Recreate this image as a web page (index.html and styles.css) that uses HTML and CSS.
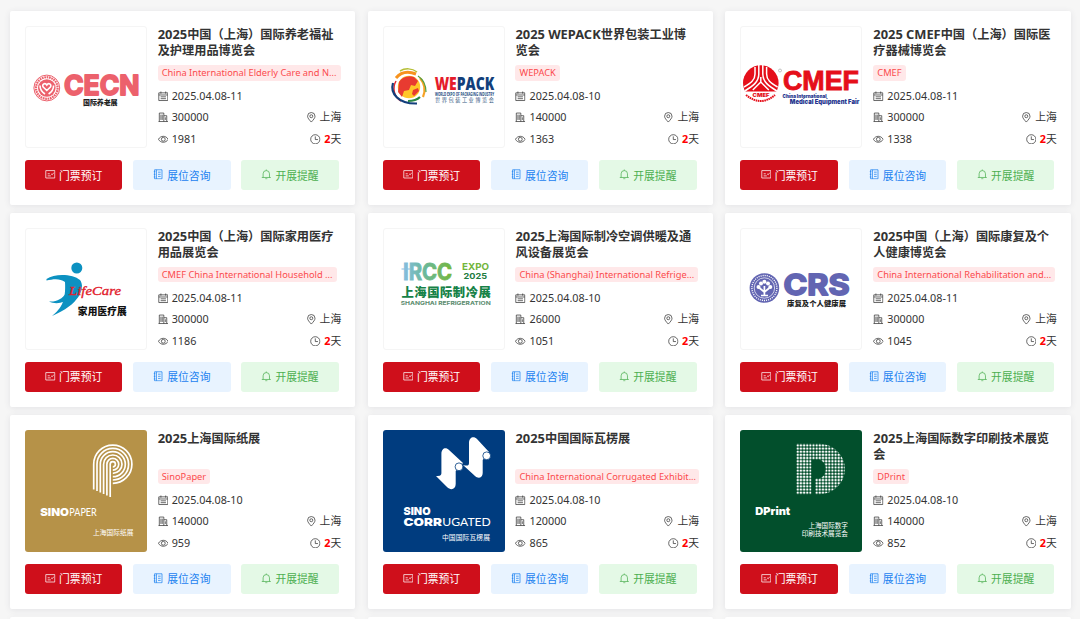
FILE: index.html
```html
<!DOCTYPE html>
<html lang="zh-CN">
<head>
    <meta charset="UTF-8">
    <meta name="viewport" content="width=device-width, initial-scale=1.0">
    <title>展会列表</title>
    <link rel="stylesheet" href="styles.css">
</head>
<body>
    <!-- 图标 -->
    <svg class="sprite" width="0" height="0">
        <symbol id="i-date" viewBox="0 0 20 20"><path d="M1.500 3.500h17v14.500h-17zM1.500 7.500h17M5.500 1v4M14.500 1v4M5 11h10M5 14.500h10"/></symbol>
        <symbol id="i-area" viewBox="0 0 20 20"><path d="M2.500 18V2h8.500v16M11 7h5.500v11M1 18h18M5.500 5v10M8 5v10M13.800 10v5"/></symbol>
        <symbol id="i-eye" viewBox="0 0 20 20"><path d="M.8 10C5 2.500 15 2.500 19.200 10C15 17.500 5 17.500 .8 10z"/><circle cx="10" cy="10" r="3.600"/></symbol>
        <symbol id="i-pin" viewBox="0 0 20 20"><path d="M10 19C6 14.500 3 11.500 3 8a7 7 0 0 1 14 0c0 3.500-3 6.500-7 11z"/><circle cx="10" cy="8" r="2.800"/></symbol>
        <symbol id="i-clock" viewBox="0 0 20 20"><circle cx="10" cy="10" r="8.700"/><path d="M10 4.500V10.500h5"/></symbol>
        <symbol id="i-ticket" viewBox="0 0 20 20"><path d="M1.500 3h17v14h-17zM5 9h4M5 13h6M11.500 9l2 2 3-4"/></symbol>
        <symbol id="i-note" viewBox="0 0 20 20"><path d="M3 1.500h14v17H3zM6.500 1.500v17M9.500 6h5M9.500 10h5M9.500 14h5M1.500 5h3M1.500 10h3M1.500 15h3"/></symbol>
        <symbol id="i-bell" viewBox="0 0 20 20"><path d="M1.500 16h17M4 16V9a6 6 0 0 1 12 0v7M10 3V1M8 18.500h4"/></symbol>
    </svg>

    <!-- 展会 logo -->
    <template id="cecn">
        <svg viewBox="0 0 122 122">
            <g fill="none" stroke="#ec616c">
                <circle cx="21.800" cy="62" r="12.900" stroke-width="1"/>
                <circle cx="21.800" cy="62" r="10.800" stroke-width="2.200" stroke-dasharray="1.700 .7"/>
            </g>
            <circle cx="21.800" cy="62" r="8.800" fill="#ec616c"/>
            <path d="M21.800 64.500l-3.600-3.500c-1.800-3 2-4.500 3.600-2 1.600-2.500 5.400-1 3.600 2zM15 59.500c0 4 2 6.500 5 8.500M28.600 59.500c0 4-2 6.500-5 8.500" fill="none" stroke="#fff" stroke-width="1.600"/>
            <text class="inter bold" x="39" y="68.800" font-size="27.500" textLength="75.500" lengthAdjust="spacingAndGlyphs" fill="#ec616c" stroke="#ec616c" stroke-width="1.800" stroke-linejoin="round">CECN</text>
            <text class="black" x="58" y="78.800" font-size="7" textLength="34.500" fill="#222">国际养老展</text>
        </svg>
    </template>
    <template id="wepack">
        <svg viewBox="0 0 122 122">
            <circle cx="26" cy="61" r="11.200" fill="#ffc629"/>
            <path d="M16 56c3-5 9-7 15-5l4 4-3 5-4-1-2 5-5 1-2 6-4-5zM30 64l5-2 1 3-5 5-2-2z" fill="#e83b31"/>
            <g fill="none">
                <path d="M13 52C18 46 25 45 33 48" stroke="#f7931e" stroke-width="3"/>
                <path d="M17 45C22 42 29 42 34 46" stroke="#b5be35" stroke-width="1.500"/>
                <path d="M13 55C9 62 11 71 18 75" stroke="#e32d35" stroke-width="1.500"/>
                <path d="M10 57C7 67 15 78 34 77.500" stroke="#123f7b" stroke-width="2.200"/>
                <path d="M37 52c5 6 6 12 3 19" stroke="#f7a325" stroke-width="2.200"/>
                <path d="M35 50c6 4 8 9 8 16" stroke="#56a243" stroke-width="1.200"/>
                <path d="M25 75c5 0 9-1 12-4" stroke="#298744" stroke-width="2"/>
            </g>
            <text class="opensans black" x="51.700" y="63.500" font-size="17.500" textLength="59.500" lengthAdjust="spacingAndGlyphs" fill="#123f7b"><tspan fill="#e51c2b">WE</tspan>PACK</text>
            <text class="opensans bold" x="52" y="69.700" font-size="4.300" textLength="59" lengthAdjust="spacingAndGlyphs" fill="#123f7b">WORLD EXPO OF PACKAGING INDUSTRY</text>
            <text x="52" y="75.500" font-size="5.200" textLength="59" fill="#34587f">世界包装工业博览会</text>
        </svg>
    </template>
    <template id="cmef">
        <svg viewBox="0 0 122 122">
            <circle cx="20.800" cy="57" r="17.800" fill="#e50f1a"/>
            <g fill="none" stroke="#fff" stroke-width="1.500">
                <path d="M18.800 36v12c0 8-6 12-14 17M22.800 36v12c0 8 6 12 14 17"/>
                <path d="M15 41v7c0 6-4 9-11 13M26.600 41v7c0 6 4 9 11 13"/>
                <path d="M20.800 51v5M20.800 56l-8 8M20.800 56l8 8"/>
            </g>
            <path d="M2 65.500h38l-4 12H5z" fill="#fff"/>
            <text class="inter black" x="12.500" y="70.500" font-size="5" textLength="17" lengthAdjust="spacingAndGlyphs" fill="#e50f1a">CMEF</text>
            <path d="M6 69Q20.800 81 35 69" fill="none" stroke="#e50f1a" stroke-width="2" stroke-dasharray="1.600 .6"/>
            <circle cx="40" cy="44.500" r="1.500" fill="none" stroke="#888" stroke-width=".5"/>
            <text class="arial bold" x="43" y="64.300" font-size="27" textLength="76" lengthAdjust="spacingAndGlyphs" fill="#e50f1a" stroke="#e50f1a" stroke-width=".9">CMEF</text>
            <text class="inter black" x="42.500" y="71.800" font-size="5.300" textLength="44" lengthAdjust="spacingAndGlyphs" fill="#24358e">China International</text>
            <text class="inter black" x="49.800" y="77.600" font-size="6.300" textLength="69.500" lengthAdjust="spacingAndGlyphs" fill="#24358e">Medical Equipment Fair</text>
        </svg>
    </template>
    <template id="lifecare">
        <svg viewBox="0 0 122 122">
            <g fill="#0c91c1">
                <circle cx="51.800" cy="40" r="5.500"/>
                <path d="M21.500 51C30 45 48 46 55 52C61 60 54 77 27 88C37 80 41 72 40 54C35 50 28 51 21.500 52.500z"/>
                <path d="M24 73.500C32 74 37 71 41 65L46 69C40 75 31 77 24 73.500z"/>
            </g>
            <text class="script" x="44" y="66.500" font-size="13.500" textLength="52" lengthAdjust="spacingAndGlyphs" fill="#e2202c" stroke="#e2202c" stroke-width=".35">LifeCare</text>
            <text class="black" x="52.800" y="87.300" font-size="9.700" textLength="49" fill="#111">家用医疗展</text>
        </svg>
    </template>
    <template id="ircc">
        <svg viewBox="0 0 122 122">
            <linearGradient id="ircc-g" gradientUnits="userSpaceOnUse" x1="20" y1="0" x2="69" y2="0"><stop offset="0" stop-color="#86bde0"/><stop offset=".45" stop-color="#6ab99a"/><stop offset="1" stop-color="#75b63b"/></linearGradient>
            <text class="inter bold" x="20" y="51.800" font-size="23" textLength="49" lengthAdjust="spacingAndGlyphs" fill="url(#ircc-g)" stroke="url(#ircc-g)" stroke-width=".9">IRCC</text>
            <path d="M18.500 41h9" stroke="#86bde0" stroke-width="1.200"/>
            <text class="inter bold" x="79" y="41.900" font-size="9.500" textLength="27" lengthAdjust="spacingAndGlyphs" fill="#72b53b">EXPO</text>
            <text class="inter bold" x="80.500" y="50.500" font-size="7.800" textLength="23.500" lengthAdjust="spacingAndGlyphs" fill="#217b40">2025</text>
            <text class="black" x="18.400" y="68.900" font-size="12.300" textLength="89.500" fill="#168247">上海国际制冷展</text>
            <text class="inter bold" x="17.700" y="76.700" font-size="5.400" textLength="90" lengthAdjust="spacingAndGlyphs" fill="#5d8d70">SHANGHAI REFRIGERATION</text>
        </svg>
    </template>
    <template id="crs">
        <svg viewBox="0 0 122 122">
            <circle cx="24.400" cy="60" r="14.800" fill="#6265b2"/>
            <circle cx="24.400" cy="60" r="12.500" fill="none" stroke="#fff" stroke-width="1.300" stroke-dasharray="1.100 1"/>
            <circle cx="24.400" cy="60" r="10.200" fill="none" stroke="#fff" stroke-width=".7"/>
            <path d="M24.400 67v-9M24.400 64l-5-4M24.400 64l5-4M21 67.500h7" stroke="#fff" stroke-width="1.700"/>
            <g fill="#fff"><circle cx="18.500" cy="59" r="2"/><circle cx="21" cy="55.500" r="2"/><circle cx="24.400" cy="53.800" r="2"/><circle cx="28" cy="55.500" r="2"/><circle cx="30.300" cy="59" r="2"/></g>
            <text class="inter bold" x="43.500" y="67.300" font-size="29" textLength="66" lengthAdjust="spacingAndGlyphs" fill="#6265b2" stroke="#6265b2" stroke-width="1.800" stroke-linejoin="round">CRS</text>
            <text class="black" x="47" y="77.800" font-size="7.300" textLength="59" fill="#222">康复及个人健康展</text>
        </svg>
    </template>
    <template id="sinopaper">
        <svg viewBox="0 0 122 122">
            <path fill="#b69248" d="M0 0h122v122H0z"/>
            <g fill="none" stroke="#fff" stroke-width="1.700">
                <path d="M68.700 59.500V34.200A19.100 19.100 0 1 1 87.800 53.300"/>
                <path d="M72 61V34.200A15.800 15.800 0 1 1 87.800 50"/>
                <path d="M75.300 62.500V34.200A12.500 12.500 0 1 1 87.800 46.700"/>
                <path d="M78.600 64V34.200A9.200 9.200 0 1 1 87.800 43.400"/>
                <path d="M81.900 65.500V34.200A5.900 5.900 0 1 1 87.800 40.100"/>
                <path d="M85.200 67V34.200A2.600 2.600 0 1 1 87.800 36.800"/>
            </g>
            <text class="inter black" x="15.200" y="85.500" font-size="10.800" textLength="28.700" lengthAdjust="spacingAndGlyphs" fill="#fff">SINO</text>
            <text class="lato" x="44.300" y="85.500" font-size="11" textLength="27.500" lengthAdjust="spacingAndGlyphs" fill="#fff">PAPER</text>
            <text x="68" y="105.300" font-size="6.700" textLength="40.500" fill="#fff">上海国际纸展</text>
        </svg>
    </template>
    <template id="corrugated">
        <svg viewBox="0 0 122 122">
            <path fill="#003c7f" d="M0 0h122v122H0z"/>
            <g fill="#fff">
                <path d="M53 46C56 46 58.400 46 58.400 43V24C58.400 18 63 17 66 20L80 33L72.700 41V54C72.700 59 68 61 64 57z"/>
                <path d="M80 35C84 36 86 36 86 33V13C86 7 91 6 94 9L106 22L99.700 30V43C99.700 48 95 49 92 46z"/>
            </g>
            <g fill="#fff" stroke="#003c7f" stroke-width=".8"><circle cx="76" cy="36.800" r="3.900"/><circle cx="103.700" cy="25.800" r="3.900"/></g>
            <g class="inter black" fill="#fff">
                <text x="20.500" y="85.400" font-size="11" textLength="27" lengthAdjust="spacingAndGlyphs">SINO</text>
                <text x="20.500" y="96.200" font-size="11" textLength="38.500" lengthAdjust="spacingAndGlyphs">CORR</text>
            </g>
            <text class="lato" x="59.300" y="96.200" font-size="12" textLength="48.500" lengthAdjust="spacingAndGlyphs" fill="#fff">UGATED</text>
            <text x="59" y="109.800" font-size="6.800" textLength="48" fill="#fff">中国国际瓦楞展</text>
        </svg>
    </template>
    <template id="dprint">
        <svg viewBox="0 0 122 122">
            <pattern id="dots" width="3.150" height="3.150" x="56.200" y="13.800" patternUnits="userSpaceOnUse"><circle cx="1.570" cy="1.570" r="1.200" fill="#fff"/></pattern>
            <path fill="#024f2c" d="M0 0h122v122H0z"/>
            <path d="M56.200 13.800h23.500a25.200 25.200 0 0 1 0 50.400H75V48.500h4.700a10.500 10.500 0 0 0 0-19H71.500v34.700H56.200z" fill="url(#dots)"/>
            <text class="inter black" x="15.300" y="84.800" font-size="10.800" textLength="35" lengthAdjust="spacingAndGlyphs" fill="#fff">DPrint</text>
            <text x="68.400" y="97.500" font-size="6.600" textLength="39.500" fill="#fff">上海国际数字</text>
            <text x="61.700" y="105.700" font-size="6.600" textLength="46.200" fill="#fff">印刷技术展览会</text>
        </svg>
    </template>

    <div id="expo-list"></div>

    <script>
        const expos = [
            { logo: 'cecn', title: '2025中国（上海）国际养老福祉及护理用品博览会', en: 'China International Elderly Care and N...', date: '2025.04.08-11', area: 300000, views: 1981 },
            { logo: 'wepack', title: '2025 WEPACK世界包装工业博览会', en: 'WEPACK', date: '2025.04.08-10', area: 140000, views: 1363 },
            { logo: 'cmef', title: '2025 CMEF中国（上海）国际医疗器械博览会', en: 'CMEF', date: '2025.04.08-11', area: 300000, views: 1338 },
            { logo: 'lifecare', title: '2025中国（上海）国际家用医疗用品展览会', en: 'CMEF China International Household ...', date: '2025.04.08-11', area: 300000, views: 1186 },
            { logo: 'ircc', title: '2025上海国际制冷空调供暖及通风设备展览会', en: 'China (Shanghai) International Refrige...', date: '2025.04.08-10', area: 26000, views: 1051 },
            { logo: 'crs', title: '2025中国（上海）国际康复及个人健康博览会', en: 'China International Rehabilitation and...', date: '2025.04.08-11', area: 300000, views: 1045 },
            { logo: 'sinopaper', title: '2025上海国际纸展', en: 'SinoPaper', date: '2025.04.08-10', area: 140000, views: 959, solid: true },
            { logo: 'corrugated', title: '2025中国国际瓦楞展', en: 'China International Corrugated Exhibit...', date: '2025.04.08-10', area: 120000, views: 865, solid: true },
            { logo: 'dprint', title: '2025上海国际数字印刷技术展览会', en: 'DPrint', date: '2025.04.08-10', area: 140000, views: 852, solid: true }
        ];

        function icon(name) {
            return `<svg class="icon"><use href="#i-${name}"/></svg>`;
        }

        // 标题里的数字和英文单独设置字号
        function formatTitle(title) {
            return title.replace(/[0-9A-Z]+/g, '<span class="latin">$&</span>');
        }

        function card(expo) {
            return `
                <div class="card">
                    <div class="card-top">
                        <div class="logo${expo.solid ? ' solid' : ''}">${document.getElementById(expo.logo).innerHTML}</div>
                        <div class="info">
                            <h3>${formatTitle(expo.title)}</h3>
                            <div class="tag">${expo.en}</div>
                            <div class="row"><span>${icon('date')}${expo.date}</span></div>
                            <div class="row"><span>${icon('area')}${expo.area}</span><span>${icon('pin')}上海</span></div>
                            <div class="row"><span>${icon('eye')}${expo.views}</span><span>${icon('clock')}<b>2</b>天</span></div>
                        </div>
                    </div>
                    <div class="buttons">
                        <button class="btn-ticket">${icon('ticket')}门票预订</button>
                        <button class="btn-booth">${icon('note')}展位咨询</button>
                        <button class="btn-remind">${icon('bell')}开展提醒</button>
                    </div>
                </div>`;
        }

        // 最后一行卡片只露出顶边
        document.getElementById('expo-list').innerHTML =
            expos.map(card).join('') + '<div class="card-edge"></div>'.repeat(3);
    </script>
</body>
</html>
```
FILE: styles.css
```css
* {
    box-sizing: border-box;
}

body {
    margin: 0;
    background-color: #f6f6f6;
    color: #333;
    font-family: "Noto Sans", "Noto Sans CJK SC", sans-serif;
    font-size: 10.8px;
}

.sprite {
    position: absolute;
}

#expo-list {
    display: grid;
    grid-template-columns: repeat(3, 345.5px);
    grid-template-rows: repeat(3, 194.4px) 2px;
    column-gap: 12.3px;
    row-gap: 7.6px;
    height: 619px;
    padding: 11px 0 0 9.9px;
    overflow: hidden;
}

.card,
.card-edge {
    background-color: #fff;
    border-radius: 2px;
    box-shadow: 0 1px 6px rgba(60, 60, 90, 0.1);
}

.card {
    padding: 15px 14px 15px 15px;
}

.card-edge {
    border-radius: 2px 2px 0 0;
}

.card-top {
    display: flex;
    gap: 10.8px;
    height: 122px;
}

.logo {
    width: 122px;
    height: 122px;
    flex: none;
    border: 1px solid #f5f5f5;
    border-radius: 3px;
    overflow: hidden;
}

.logo svg {
    display: block;
    width: 122px;
    height: 122px;
    margin: -1px;
}

.logo.solid {
    border: none;
}

.logo.solid svg {
    margin: 0;
}

.info {
    width: 183.5px;
}

h3 {
    height: 33px;
    margin: 0 0 6px;
    padding: 1px 5px 0 0;
    font-size: 12.2px;
    font-weight: bold;
    line-height: 16px;
}

h3 .latin {
    font-size: 12.9px;
    line-height: 1;
}

.tag {
    width: fit-content;
    max-width: 100%;
    height: 15.5px;
    margin-bottom: 4.6px;
    padding: 0 4px;
    border-radius: 3px;
    background-color: #ffe8e9;
    color: #fb4b4d;
    font-size: 9.3px;
    line-height: 15.5px;
    white-space: nowrap;
    overflow: hidden;
}

.row {
    display: flex;
    justify-content: space-between;
    height: 21.3px;
    line-height: 21.3px;
}

.row b {
    color: #f00;
}

.icon {
    width: 10.6px;
    height: 10.6px;
    margin-right: 3.4px;
    fill: none;
    stroke: currentColor;
    stroke-width: 1.4;
    vertical-align: -1.5px;
}

.buttons {
    display: flex;
    gap: 10.6px;
    margin-top: 12px;
}

button {
    display: flex;
    align-items: center;
    justify-content: center;
    width: 97.6px;
    height: 30px;
    padding: 0 0 1px;
    border: none;
    border-radius: 3px;
    font-family: inherit;
    font-size: 10.8px;
}

.btn-ticket {
    background-color: #cf0f1b;
    color: #fff;
}

.btn-booth {
    background-color: #e8f3ff;
    color: #1c82f0;
}

.btn-remind {
    background-color: #e4f9e6;
    color: #4caf50;
}

/* logo 文字 */
.inter {
    font-family: Inter, sans-serif;
}

.opensans {
    font-family: "Open Sans", "Noto Sans", sans-serif;
}

.arial {
    font-family: "Liberation Sans", Arial, sans-serif;
}

.lato {
    font-family: Lato, sans-serif;
}

.script {
    font-family: "Liberation Serif", serif;
    font-style: italic;
}

.bold {
    font-weight: 700;
}

.black {
    font-weight: 900;
}
```
